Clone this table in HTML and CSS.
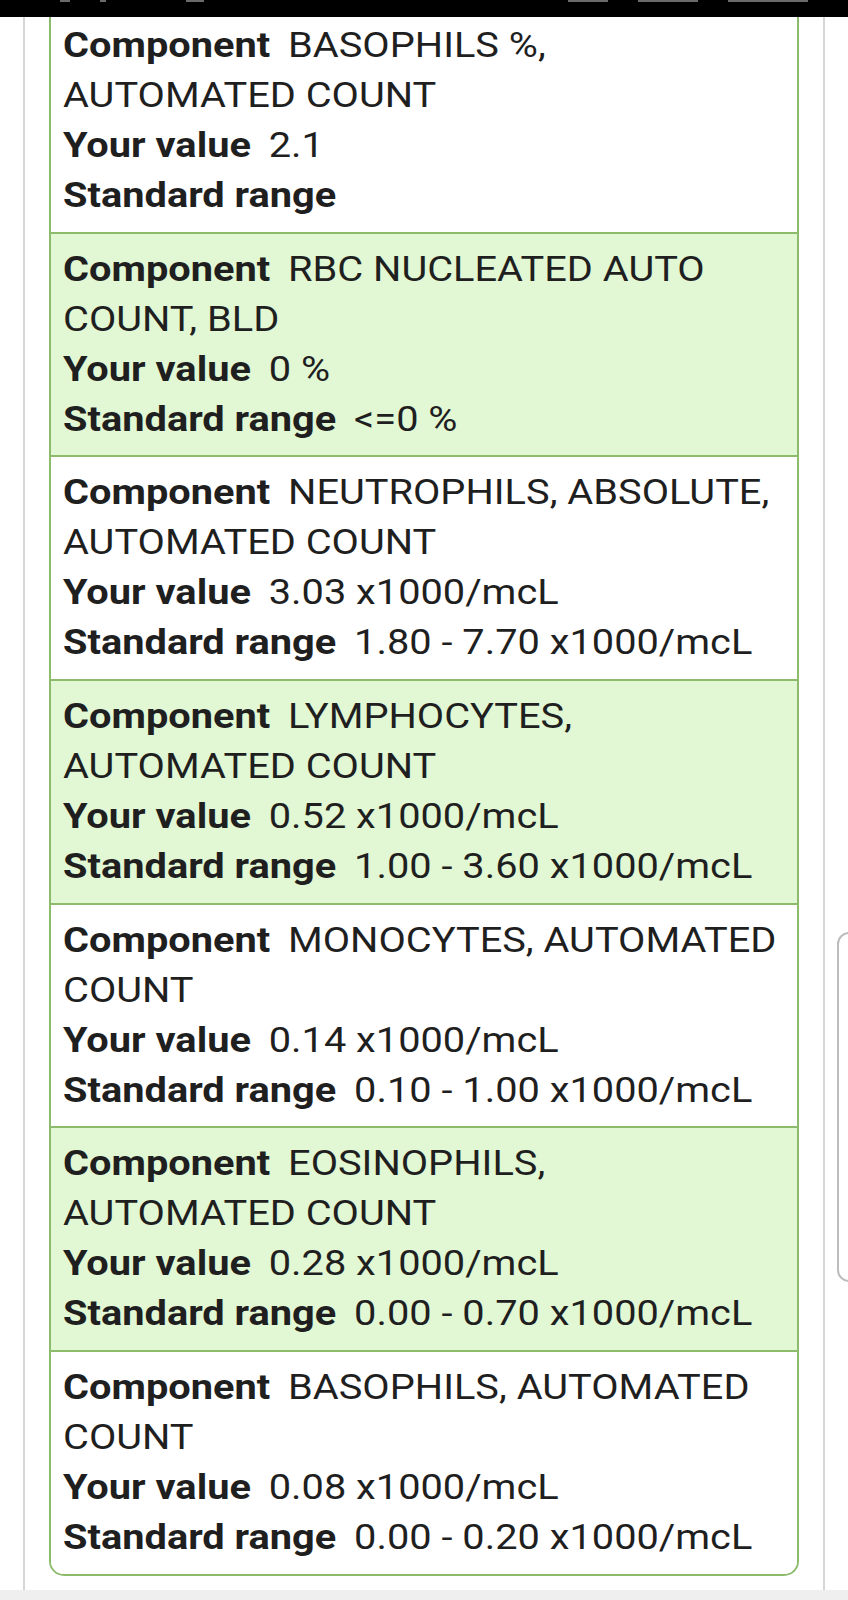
FILE: index.html
```html
<!DOCTYPE html>
<html>
<head>
<meta charset="utf-8">
<link rel="stylesheet" href="styles.css">
</head>
<body>
<div class="status">
  <span class="sb sb-a"></span><span class="sb sb-b"></span><span class="sb sb-c"></span>
  <span class="sb-spacer"></span>
  <span class="sb sb-d"></span><span class="sb sb-e"></span><span class="sb sb-f"></span>
</div>
<div class="page">
  <div class="results">
    <div class="row first"><div class="txt"><b class="lbl">Component</b> BASOPHILS %, AUTOMATED COUNT<br><b class="lbl">Your value</b> 2.1<br><b class="lbl">Standard range</b></div></div>
    <div class="row alt"><div class="txt"><b class="lbl">Component</b> RBC NUCLEATED AUTO COUNT, BLD<br><b class="lbl">Your value</b> 0 %<br><b class="lbl">Standard range</b> &lt;=0 %</div></div>
    <div class="row"><div class="txt"><b class="lbl">Component</b> NEUTROPHILS, ABSOLUTE, AUTOMATED COUNT<br><b class="lbl">Your value</b> 3.03 x1000/mcL<br><b class="lbl">Standard range</b> 1.80 - 7.70 x1000/mcL</div></div>
    <div class="row alt"><div class="txt"><b class="lbl">Component</b> LYMPHOCYTES, AUTOMATED COUNT<br><b class="lbl">Your value</b> 0.52 x1000/mcL<br><b class="lbl">Standard range</b> 1.00 - 3.60 x1000/mcL</div></div>
    <div class="row"><div class="txt"><b class="lbl">Component</b> MONOCYTES, AUTOMATED COUNT<br><b class="lbl">Your value</b> 0.14 x1000/mcL<br><b class="lbl">Standard range</b> 0.10 - 1.00 x1000/mcL</div></div>
    <div class="row alt"><div class="txt"><b class="lbl">Component</b> EOSINOPHILS, AUTOMATED COUNT<br><b class="lbl">Your value</b> 0.28 x1000/mcL<br><b class="lbl">Standard range</b> 0.00 - 0.70 x1000/mcL</div></div>
    <div class="row last"><div class="txt"><b class="lbl">Component</b> BASOPHILS, AUTOMATED COUNT<br><b class="lbl">Your value</b> 0.08 x1000/mcL<br><b class="lbl">Standard range</b> 0.00 - 0.20 x1000/mcL</div></div>
  </div>
</div>
<div class="bottom"></div>
<div class="scroll-handle"></div>
</body>
</html>
```
FILE: styles.css
```css
html, body {
  margin: 0;
  padding: 0;
  background: #ffffff;
}
body {
  width: 848px;
  height: 1600px;
  overflow: hidden;
  position: relative;
  font-family: Roboto, "Liberation Sans", sans-serif;
  color: #1f1f1f;
}
.status {
  height: 17px;
  background: #000000;
  display: flex;
  align-items: flex-start;
  padding: 0 40px;
  gap: 30px;
}
.sb { display: block; height: 2px; background: #6a6a6a; }
.sb-a { width: 10px; margin-left: 20px; }
.sb-b { width: 6px; }
.sb-c { width: 18px; margin-left: 50px; }
.sb-spacer { flex: 1; }
.sb-d { width: 40px; }
.sb-e { width: 60px; }
.sb-f { width: 80px; }
.page {
  margin: 0 23px;
  border-left: 2px solid #d6d6d6;
  border-right: 2px solid #d6d6d6;
  padding: 0 24px;
  height: 1573px;
  box-sizing: border-box;
}
.results {
  border: 2px solid #8cbb6c;
  border-top: none;
  border-radius: 0 0 15px 15px;
  overflow: hidden;
}
.row {
  padding: 11px 14px 10.7px 12px;
  font-size: 35px;
  line-height: 50px;
  border-bottom: 2px solid #8cbb6c;
  background: #ffffff;
}
.txt {
  width: 630px;
  transform: scaleX(1.136);
  transform-origin: 0 0;
}
.row.alt { background: #e2f7d3; }
.row.first { padding-top: 4px; }
.row.last { border-bottom: none; }
.lbl { font-weight: 700; margin-right: 7px; }
.bottom {
  height: 10px;
  background: #efefef;
}
.scroll-handle {
  position: absolute;
  left: 837px;
  top: 932px;
  width: 30px;
  height: 346px;
  border: 2px solid #bdbdbd;
  border-radius: 12px;
  background: #ffffff;
}
```
